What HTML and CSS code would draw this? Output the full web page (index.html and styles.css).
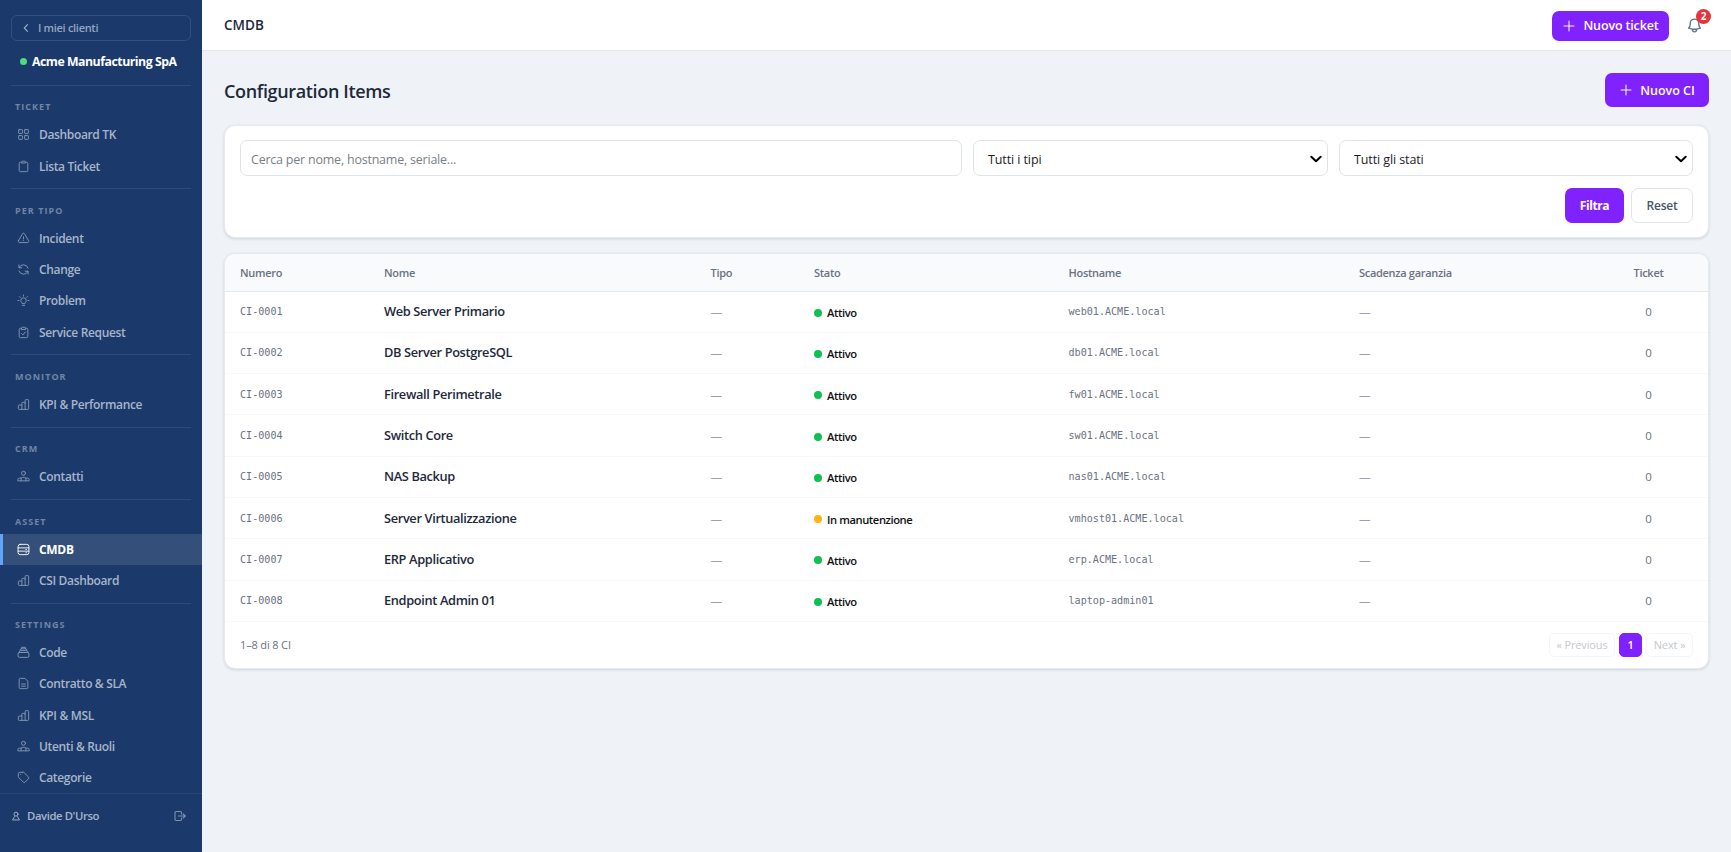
FILE: index.html
```html
<!DOCTYPE html>
<html lang="it">
<head>
<meta charset="utf-8">
<title>CMDB</title>
<link rel="stylesheet" href="styles.css">
</head>
<body>
<svg class="sprite" aria-hidden="true">
  <symbol id="grid" viewBox="0 0 24 24"><rect x="3" y="3" width="7" height="7" rx="1"/><rect x="14" y="3" width="7" height="7" rx="1"/><rect x="3" y="14" width="7" height="7" rx="1"/><rect x="14" y="14" width="7" height="7" rx="1"/></symbol>
  <symbol id="clip" viewBox="0 0 24 24"><path d="M8.500 4.200H6.300A2.300 2.300 0 0 0 4 6.500v12.700a2.300 2.300 0 0 0 2.300 2.300h11.400a2.300 2.300 0 0 0 2.300-2.300V6.500a2.300 2.300 0 0 0-2.300-2.300h-2.200M8.500 3.800A1.500 1.500 0 0 1 10 2.300h4a1.500 1.500 0 0 1 1.500 1.500v1.700h-7z"/></symbol>
  <symbol id="check" viewBox="0 0 24 24"><path d="M8.500 4.200H6.300A2.300 2.300 0 0 0 4 6.500v12.700a2.300 2.300 0 0 0 2.300 2.300h11.400a2.300 2.300 0 0 0 2.300-2.300V6.500a2.300 2.300 0 0 0-2.300-2.300h-2.200M8.500 3.800A1.500 1.500 0 0 1 10 2.300h4a1.500 1.500 0 0 1 1.500 1.500v2.700h-7zM8.500 14l2.500 2.500 4.500-5.500"/></symbol>
  <symbol id="warn" viewBox="0 0 24 24"><path d="M12 9v3.750m-9.303 3.376c-.866 1.500.217 3.374 1.948 3.374h14.710c1.730 0 2.813-1.874 1.948-3.374L13.949 3.378c-.866-1.500-3.032-1.500-3.898 0L2.697 16.126ZM12 15.750h.007v.008H12v-.008Z"/></symbol>
  <symbol id="cycle" viewBox="0 0 24 24"><path d="M3.500 3.500v5.300h5.300M3.800 8.500A9 9 0 0 1 20.500 9.500M20.500 20.500v-5.300h-5.300M20.200 15.500A9 9 0 0 1 3.500 14.500"/></symbol>
  <symbol id="bulb" viewBox="0 0 24 24"><path d="M9.500 17c0-1.200-2.500-2-2.500-5a5 5 0 0 1 10 0c0 3-2.500 3.800-2.500 5zM10 21h4M12 2v2M1.800 12h2M20.200 12h2M4.500 4.800l1.500 1.500M19.500 4.800 18 6.300"/></symbol>
  <symbol id="bars" viewBox="0 0 24 24"><path d="M9 21V9.500A1.500 1.500 0 0 1 10.500 8h3A1.500 1.500 0 0 1 15 9.500V21M9 13H4a1.500 1.500 0 0 0-1.500 1.500v5A1.500 1.500 0 0 0 4 21h16a1.500 1.500 0 0 0 1.500-1.500v-15A1.500 1.500 0 0 0 20 3h-3.500A1.500 1.500 0 0 0 15 4.500V10"/></symbol>
  <symbol id="people" viewBox="0 0 24 24"><circle cx="12" cy="6" r="3.700"/><path d="M7.500 20v-3.500a3 3 0 0 1 3-3h3a3 3 0 0 1 3 3V20M7.500 15H4.500a3 3 0 0 0-3 3v2h21v-2a3 3 0 0 0-3-3h-3"/></symbol>
  <symbol id="server" viewBox="0 0 24 24"><rect x="2" y="2.500" width="20" height="19" rx="4"/><path d="M2 9h20M2 15h20M16.500 12h1M16.500 18h1"/></symbol>
  <symbol id="stack" viewBox="0 0 24 24"><rect x="2" y="12" width="20" height="9" rx="2.500"/><path d="M3.300 12.500 5 9.500a2 2 0 0 1 1.800-1h10.400a2 2 0 0 1 1.800 1l1.700 3M6 8.500V7a1.700 1.700 0 0 1 1.700-1.700h8.600A1.700 1.700 0 0 1 18 7v1.500M8.500 5V2.500h7V5"/></symbol>
  <symbol id="doc" viewBox="0 0 24 24"><path d="M14 2.500H6a2 2 0 0 0-2 2v15a2 2 0 0 0 2 2h12a2 2 0 0 0 2-2V8.500zM8.500 13h7M8.500 17h7"/></symbol>
  <symbol id="tag" viewBox="0 0 24 24"><path d="M10.500 2.500H5A2.500 2.500 0 0 0 2.500 5v5.500c0 .6.240 1.200.660 1.600l8.700 8.700c.8.800 2 .8 2.800 0l6.700-6.700c.8-.8.800-2 0-2.800l-8.700-8.700a2.300 2.300 0 0 0-1.600-.6zM6.500 6.500h.01"/></symbol>
  <symbol id="user" viewBox="0 0 24 24"><circle cx="12" cy="7.500" r="4.800"/><path d="M8.500 13.500 3.500 21.500h17l-5-8"/></symbol>
  <symbol id="exit" viewBox="0 0 24 24"><path d="M15 8V5.300A2.300 2.300 0 0 0 12.700 3H4.300A2.300 2.300 0 0 0 2 5.300v13.400A2.300 2.300 0 0 0 4.300 21h8.400a2.300 2.300 0 0 0 2.300-2.300V16M9 12h13M18.500 8l4 4-4 4"/></symbol>
  <symbol id="left" viewBox="0 0 24 24"><path d="M15.500 4 8 12l7.500 8"/></symbol>
  <symbol id="plus" viewBox="0 0 24 24"><path d="M12 3.500v17M3.500 12h17"/></symbol>
  <symbol id="down" viewBox="0 0 12 12"><path d="M1.300 3.700 6 8.300l4.700-4.600"/></symbol>
  <symbol id="bell" viewBox="0 0 24 24"><path d="M14.857 17.082a23.848 23.848 0 0 0 5.454-1.310A8.967 8.967 0 0 1 18 9.750V9A6 6 0 0 0 6 9v.750a8.967 8.967 0 0 1-2.312 6.022c1.733.640 3.560 1.085 5.455 1.310m5.714 0a24.255 24.255 0 0 1-5.714 0m5.714 0a3 3 0 1 1-5.714 0"/></symbol>
</svg>
<div class="app">
  <aside class="sidebar">
    <a class="back"><svg class="icon"><use href="#left"/></svg><span>I miei clienti</span></a>
    <div class="client"><i></i><span>Acme Manufacturing SpA</span></div>
    <nav class="nav">
      <section><h2>TICKET</h2>
        <a><svg class="icon"><use href="#grid"/></svg><span>Dashboard TK</span></a>
        <a><svg class="icon"><use href="#clip"/></svg><span>Lista Ticket</span></a></section>
      <section><h2>PER TIPO</h2>
        <a><svg class="icon"><use href="#warn"/></svg><span>Incident</span></a>
        <a><svg class="icon"><use href="#cycle"/></svg><span>Change</span></a>
        <a><svg class="icon"><use href="#bulb"/></svg><span>Problem</span></a>
        <a><svg class="icon"><use href="#check"/></svg><span>Service Request</span></a></section>
      <section><h2>MONITOR</h2>
        <a><svg class="icon"><use href="#bars"/></svg><span>KPI &amp; Performance</span></a></section>
      <section><h2>CRM</h2>
        <a><svg class="icon"><use href="#people"/></svg><span>Contatti</span></a></section>
      <section><h2>ASSET</h2>
        <a class="active"><svg class="icon"><use href="#server"/></svg><span>CMDB</span></a>
        <a><svg class="icon"><use href="#bars"/></svg><span>CSI Dashboard</span></a></section>
      <section><h2>SETTINGS</h2>
        <a><svg class="icon"><use href="#stack"/></svg><span>Code</span></a>
        <a><svg class="icon"><use href="#doc"/></svg><span>Contratto &amp; SLA</span></a>
        <a><svg class="icon"><use href="#bars"/></svg><span>KPI &amp; MSL</span></a>
        <a><svg class="icon"><use href="#people"/></svg><span>Utenti &amp; Ruoli</span></a>
        <a><svg class="icon"><use href="#tag"/></svg><span>Categorie</span></a></section>
    </nav>
    <footer class="account"><svg class="icon user"><use href="#user"/></svg><span>Davide D'Urso</span><svg class="icon exit"><use href="#exit"/></svg></footer>
  </aside>
  <div class="page">
    <header class="topbar">
      <span class="crumb">CMDB</span>
      <button class="btn primary new-ticket"><svg class="icon"><use href="#plus"/></svg><span>Nuovo ticket</span></button>
      <div class="bell"><svg class="icon"><use href="#bell"/></svg><b>2</b></div>
    </header>
    <main class="main">
      <div class="heading"><h1>Configuration Items</h1>
        <button class="btn primary new-ci"><svg class="icon"><use href="#plus"/></svg><span>Nuovo CI</span></button></div>
      <form class="card filters">
        <div class="field search"><span>Cerca per nome, hostname, seriale...</span></div>
        <div class="field select"><span>Tutti i tipi</span><svg class="icon"><use href="#down"/></svg></div>
        <div class="field select"><span>Tutti gli stati</span><svg class="icon"><use href="#down"/></svg></div>
        <div class="actions"><button type="button" class="btn primary filter">Filtra</button><button type="button" class="btn reset">Reset</button></div>
      </form>
      <div class="card listing">
        <table>
          <colgroup><col class="c1"><col class="c2"><col class="c3"><col class="c4"><col class="c5"><col class="c6"><col class="c7"></colgroup>
          <thead><tr><th>Numero</th><th>Nome</th><th>Tipo</th><th>Stato</th><th>Hostname</th><th>Scadenza garanzia</th><th class="num">Ticket</th></tr></thead>
          <tbody>
            <tr><td class="mono">CI-0001</td><td class="name">Web Server Primario</td><td class="dash">—</td><td><span class="status">Attivo</span></td><td class="mono">web01.ACME.local</td><td class="dash">—</td><td class="num">0</td></tr>
            <tr><td class="mono">CI-0002</td><td class="name">DB Server PostgreSQL</td><td class="dash">—</td><td><span class="status">Attivo</span></td><td class="mono">db01.ACME.local</td><td class="dash">—</td><td class="num">0</td></tr>
            <tr><td class="mono">CI-0003</td><td class="name">Firewall Perimetrale</td><td class="dash">—</td><td><span class="status">Attivo</span></td><td class="mono">fw01.ACME.local</td><td class="dash">—</td><td class="num">0</td></tr>
            <tr><td class="mono">CI-0004</td><td class="name">Switch Core</td><td class="dash">—</td><td><span class="status">Attivo</span></td><td class="mono">sw01.ACME.local</td><td class="dash">—</td><td class="num">0</td></tr>
            <tr><td class="mono">CI-0005</td><td class="name">NAS Backup</td><td class="dash">—</td><td><span class="status">Attivo</span></td><td class="mono">nas01.ACME.local</td><td class="dash">—</td><td class="num">0</td></tr>
            <tr><td class="mono">CI-0006</td><td class="name">Server Virtualizzazione</td><td class="dash">—</td><td><span class="status maintenance">In manutenzione</span></td><td class="mono">vmhost01.ACME.local</td><td class="dash">—</td><td class="num">0</td></tr>
            <tr><td class="mono">CI-0007</td><td class="name">ERP Applicativo</td><td class="dash">—</td><td><span class="status">Attivo</span></td><td class="mono">erp.ACME.local</td><td class="dash">—</td><td class="num">0</td></tr>
            <tr><td class="mono">CI-0008</td><td class="name">Endpoint Admin 01</td><td class="dash">—</td><td><span class="status">Attivo</span></td><td class="mono">laptop-admin01</td><td class="dash">—</td><td class="num">0</td></tr>
          </tbody>
        </table>
        <div class="pager"><span class="count">1–8 di 8 CI</span><span class="prev">« Previous</span><span class="current">1</span><span class="next">Next »</span></div>
      </div>
    </main>
  </div>
</div>
</body>
</html>
```
FILE: styles.css
```css
* { box-sizing: border-box; }
body { margin: 0; font-family: "Open Sans", "Noto Sans", sans-serif; font-size: 13px; color: #1e293b; background: #eff3f8; }
button { font: inherit; }
.sprite { position: absolute; width: 0; height: 0; }
.icon { width: 13px; height: 13px; flex: none; fill: none; stroke: currentColor; stroke-width: 1.7; stroke-linecap: round; stroke-linejoin: round; }
.app { display: flex; height: 852px; overflow: hidden; }

.sidebar { width: 202px; flex: none; display: flex; flex-direction: column; background: #1b3a6b; color: #a8b5c9; }
.back { display: flex; align-items: center; gap: 7px; height: 26px; margin: 15px 11px 0; padding: 0 0 1px 9px; border: 1px solid #32507f; border-radius: 6px; font-size: 11px; font-weight: 600; letter-spacing: -.3px; color: #94a5be; }
.back .icon { width: 10px; height: 10px; stroke-width: 3; }
.client { display: flex; align-items: center; gap: 5px; height: 43.900px; margin: 0 11px; padding: 0 0 3px 9px; color: #fff; font-weight: 700; font-size: 12.300px; letter-spacing: -.48px; white-space: nowrap; }
.client i { width: 7px; height: 7px; border-radius: 50%; background: #4ade80; }
.nav { flex: none; height: 708px; }
.nav section { padding-bottom: 6.800px; }
.nav section::before { content: ""; display: block; height: 1px; margin: 0 11px; background: #2f4c79; }
.nav h2 { margin: 0; height: 33.400px; padding: 13.500px 0 0 15px; font-size: 9px; line-height: 16px; font-weight: 700; letter-spacing: 1.050px; color: #7185a4; }
.nav a { display: flex; align-items: center; gap: 9px; height: 31.200px; padding-left: 14px; border-left: 3px solid transparent; font-size: 12px; font-weight: 600; letter-spacing: -.35px; }
.nav .icon { color: #8698b3; }
.nav a.active { color: #fff; background: #344f79; border-color: #60a5fa; font-weight: 700; letter-spacing: -.3px; }
.nav .active .icon { color: #fff; }
.account { display: flex; align-items: center; height: 59.100px; padding: 0 16px 14px 11px; border-top: 1px solid #2a4775; font-size: 11.300px; font-weight: 600; letter-spacing: -.4px; }
.account .icon { width: 10px; height: 10px; stroke-width: 2.200; margin-right: 6px; }
.account .exit { width: 12px; height: 12px; margin: 0 0 0 auto; color: #7f92af; }

.page { flex: 1; min-width: 0; }
.topbar { display: flex; align-items: center; height: 51px; padding: 0 22px; background: #fff; border-bottom: 1px solid #e3e8ee; }
.crumb { font-size: 13.500px; font-weight: 600; letter-spacing: 0; }
.btn { display: flex; align-items: center; justify-content: center; border: 0; padding: 0; border-radius: 7px; font-weight: 600; font-size: 12.500px; white-space: nowrap; }
.primary { color: #fff; background: #7f22fe; gap: 7px; }
.primary .icon { width: 14px; height: 14px; }
.new-ticket { width: 117px; height: 30px; margin: 1px 0 0 auto; letter-spacing: -.15px; }
.bell { position: relative; width: 40px; height: 30px; padding-left: 17px; display: flex; align-items: center; color: #64748b; }
.bell .icon { width: 17px; height: 17px; stroke-width: 2; }
.bell b { position: absolute; left: 27px; top: -1px; width: 15px; height: 15px; border-radius: 50%; background: #e7333c; color: #fff; font-size: 10px; line-height: 15px; text-align: center; }
.main { padding: 22px; }
.heading { display: flex; align-items: center; justify-content: space-between; height: 34px; margin-bottom: 18px; }
h1 { margin: 0; padding-top: 1px; font-size: 18px; font-weight: 600; letter-spacing: -.35px; }
.new-ci { width: 104px; height: 34px; }
.card { background: #fff; border: 1px solid #e6eaef; border-radius: 11px; box-shadow: 0 1px 3px #0f172a24; }
.filters { display: grid; grid-template-columns: 722px 355px 354px; gap: 11px; height: 113px; padding: 14px 15px; margin-bottom: 15px; }
.field { display: flex; align-items: center; height: 36px; border: 1px solid #dfe4e8; border-radius: 7px; padding: 2px 11px 0 10px; font-size: 12.500px; color: #7a7f86; letter-spacing: -.22px; }
.select { justify-content: space-between; padding: 2px 5px 0 14px; color: #1c1c1f; letter-spacing: -.1px; }
.select .icon { width: 12px; height: 12px; color: #000; stroke-width: 1.900; }
.actions { grid-column: 1 / -1; display: flex; justify-content: flex-end; gap: 7px; }
.actions .btn { height: 35px; font-size: 12px; letter-spacing: -.2px; }
.actions .filter { width: 59px; font-weight: 700; letter-spacing: -.4px; }
.reset { width: 62px; background: #fff; color: #4a5565; border: 1px solid #dfe4e8; }

.listing { overflow: hidden; height: 416px; }
table { width: 100%; table-layout: fixed; border-collapse: separate; border-spacing: 0; }
.c1 { width: 144px; } .c2 { width: 326.500px; } .c3 { width: 103.500px; } .c4 { width: 254.500px; } .c5 { width: 290.500px; } .c6 { width: 245px; }
th { height: 37.500px; padding: 0 15px; text-align: left; background: #f9fafc; border-bottom: 1px solid #e3e8ed; color: #6a7282; font-size: 11px; font-weight: 600; letter-spacing: -.3px; }
td { height: 41.300px; padding: 0 15px; border-bottom: 1px solid #f7f8fa; color: #6a7282; }
.num { text-align: center; padding-left: 0; padding-right: 0; }
td.num { font-size: 11.500px; }
.mono { font-family: "DejaVu Sans Mono", monospace; font-size: 10.100px; color: #6a7282; }
.name { padding-bottom: 1px; color: #1e293b; font-size: 12.800px; font-weight: 600; letter-spacing: -.35px; }
.dash { color: #99a1af; font-size: 11.500px; }
.status { display: flex; align-items: center; gap: 5px; padding-top: 2px; color: #111; font-size: 11.200px; font-weight: 600; letter-spacing: -.42px; }
.status::before { content: ""; width: 8px; height: 8px; border-radius: 50%; background: #12c052; }
.maintenance::before { background: #fbb416; }
.pager { display: flex; align-items: center; height: 45.500px; padding: 0 15px; font-size: 11px; letter-spacing: -.15px; color: #c5c9d0; }
.count { color: #6a7282; margin-right: auto; }
.pager span:not(.count) { display: flex; align-items: center; justify-content: center; height: 24px; border: 1px solid #f4f5f7; border-radius: 5px; margin-left: 4px; }
.prev { width: 66px; } .next { width: 47px; }
.pager .current { width: 23px; color: #fff; background: #7f22fe; border-color: #7f22fe !important; font-weight: 600; }
```
